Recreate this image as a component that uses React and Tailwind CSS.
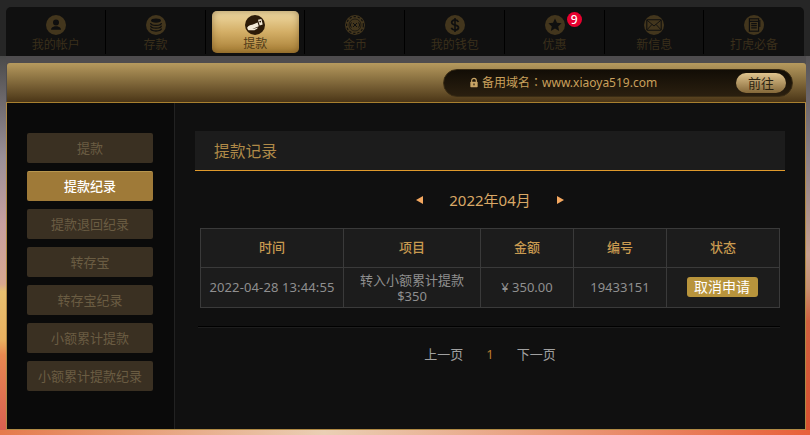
import React from "react";

const font = "font-['Noto_Sans','Noto_Sans_CJK_SC',sans-serif]";

function IconUser() {
  return (
    <svg viewBox="0 0 20 20" className="w-full h-full">
      <circle cx="10" cy="7.6" r="3" fill="currentColor" />
      <path d="M5 14.8 c0-2.4 2.4-3 3.6-3.5 h2.8 c1.2.5 3.6 1.1 3.6 3.5 z" fill="currentColor" />
    </svg>
  );
}

function IconCoins() {
  return (
    <svg viewBox="0 0 20 20" className="w-full h-full" fill="none" stroke="currentColor">
      <ellipse cx="10" cy="5.6" rx="5" ry="2.1" fill="currentColor" stroke="none" />
      <path d="M4.6 8 c0 1.5 2.4 2.4 5.4 2.4 s5.4-.9 5.4-2.4" strokeWidth="1.3" />
      <path d="M4.6 10.8 c0 1.5 2.4 2.4 5.4 2.4 s5.4-.9 5.4-2.4" strokeWidth="1.3" />
      <path d="M4.6 13.6 c0 1.5 2.4 2.4 5.4 2.4 s5.4-.9 5.4-2.4" strokeWidth="1.3" />
    </svg>
  );
}

function IconHand() {
  return (
    <svg viewBox="0 0 20 20" className="w-full h-full">
      <path d="M2.2 12.6 c1.4-2.2 3-2.8 5-2.9 l5.4-2.2 1.2 3.8 -4 1.6 -2.6.2 2.4.3 3.6-.8 c-1.6 2-4.2 3-6.4 2.6 l-3.4.1 c-.6-.8-1.2-1.6-1.2-2.7 z" fill="#f3ead8" />
      <path d="M13 4.8 l3.4-.9 1.3 5.6 -3 .9 z" fill="#f3ead8" />
      <circle cx="15.2" cy="6.6" r="0.9" fill="#2c1b08" />
    </svg>
  );
}

function IconChip() {
  return (
    <svg viewBox="0 0 20 20" className="w-full h-full" fill="none" stroke="currentColor">
      <circle cx="10" cy="10" r="8.4" strokeWidth="1.1" strokeDasharray="2.4 1.8" />
      <circle cx="10" cy="10" r="6" strokeWidth="0.7" />
      <path d="M6.4 7.4 a4 4 0 0 0 0 5.2 M13.6 7.4 a4 4 0 0 1 0 5.2" strokeWidth="0.9" />
      <path d="M8 8 L12 12 M12 8 L8 12" strokeWidth="1" />
    </svg>
  );
}

function IconDollar() {
  return (
    <svg viewBox="0 0 20 20" className="w-full h-full" fill="none" stroke="currentColor">
      <path d="M13.4 7 c-.5-1.3-1.8-2-3.4-2 -1.9 0-3.3 1-3.3 2.5 0 3.4 6.8 1.7 6.8 5 0 1.5-1.5 2.5-3.5 2.5 -1.7 0-3.1-.8-3.6-2.2" strokeWidth="1.8" />
      <path d="M10 3 V17" strokeWidth="1.6" />
    </svg>
  );
}

function IconStar() {
  return (
    <svg viewBox="0 0 20 20" className="w-full h-full">
      <path d="M10 3.6 l2 4.2 4.6.5 -3.4 3.1 1 4.5 -4.2-2.3 -4.2 2.3 1-4.5 -3.4-3.1 4.6-.5 z" fill="currentColor" />
    </svg>
  );
}

function IconMail() {
  return (
    <svg viewBox="0 0 20 20" className="w-full h-full" fill="none" stroke="currentColor">
      <rect x="2.8" y="4.8" width="14.4" height="10.4" rx="0.6" strokeWidth="1.1" />
      <path d="M3 5.2 L10 11 L17 5.2 M3 14.8 L8 9.4 M17 14.8 L12 9.4" strokeWidth="0.9" />
    </svg>
  );
}

function IconSlot() {
  return (
    <svg viewBox="0 0 20 20" className="w-full h-full" fill="none" stroke="currentColor">
      <rect x="5.4" y="3.8" width="9.2" height="12.4" strokeWidth="1.2" />
      <path d="M5.4 6.4 H14.6 M7.2 8.6 H12.8 M7.2 10.6 H12.8 M7.2 12.8 H12.8" strokeWidth="1.2" />
      <path d="M15.8 5 V12" strokeWidth="1.2" />
    </svg>
  );
}

function NavItem({ label, icon, active, badge, last }) {
  return (
    <div className={`relative h-[49px] ${last ? "" : "after:content-[''] after:absolute after:right-0 after:top-[3px] after:h-[44px] after:w-px after:bg-black"}`}>
      {active ? (
        <div className="mx-auto mt-[4px] w-[87px] h-[42px] rounded-[5px] bg-linear-to-b/srgb from-[#f1dca6] via-[#d3ae66] to-[#a67d34] shadow-[inset_0_0_7px_rgba(90,60,20,0.5)] flex flex-col items-center">
          <div className="w-5 h-5 mt-[4px] rounded-full bg-[#2c1b08] text-[#f3ead8]">{icon}</div>
          <div className="text-[12px] leading-[16px] mt-[1px] text-[#4e3a18]">{label}</div>
        </div>
      ) : (
        <div className="w-full flex flex-col items-center pt-[8px]">
          <div className="relative w-5 h-5 rounded-full bg-[#43361d] text-[#0f0f0f]">
            {icon}
            {badge && (
              <span className="absolute left-[22px] top-[-3px] w-[15px] h-[15px] rounded-full bg-[#e8002f] text-white text-[12px] font-medium leading-[15px] text-center">{badge}</span>
            )}
          </div>
          <div className="text-[12px] leading-[16px] mt-[2px] text-[#3a2f1b]">{label}</div>
        </div>
      )}
    </div>
  );
}

const navItems = [
  { label: "我的帐户", icon: <IconUser /> },
  { label: "存款", icon: <IconCoins /> },
  { label: "提款", icon: <IconHand />, active: true },
  { label: "金币", icon: <IconChip /> },
  { label: "我的钱包", icon: <IconDollar /> },
  { label: "优惠", icon: <IconStar />, badge: "9" },
  { label: "新信息", icon: <IconMail /> },
  { label: "打虎必备", icon: <IconSlot />, last: true },
];

const sideItems = ["提款", "提款纪录", "提款退回纪录", "转存宝", "转存宝纪录", "小额累计提款", "小额累计提款纪录"];

export default function App() {
  return (
    <div className={`${font} w-[810px] h-[435px] overflow-hidden flex flex-col bg-[#4e4c4e]`}>
      {/* top nav */}
      <div className="h-[56px] shrink-0 bg-[#262626] pt-[7px] px-[6px]">
        <div className="h-[49px] bg-[#101010] rounded-t-[5px] grid grid-cols-8">
          {navItems.map((item) => (
            <NavItem key={item.label} {...item} />
          ))}
        </div>
      </div>

      <div className="flex h-[374px] shrink-0">
        {/* background showing at the left */}
        <div className="w-[6px] shrink-0 bg-[linear-gradient(180deg,#4a4a4a_0%,#9a9098_27%,#c8a0a0_45%,#d8a890_61%,#e8c070_63%,#e8b060_76%,#e88850_80%,#d86050_100%)]"></div>

        <div className="w-[800px] shrink-0 pt-[7px]">
          {/* gold bar */}
          <div className="h-[39px] ml-px bg-linear-to-b/srgb from-[#b69a5e] to-[#4b3617] rounded-t-[3px] flex items-center justify-end pr-[13px]">
            <div className="w-[350px] h-[28px] rounded-full bg-linear-to-b/srgb from-[#120d06] to-[#2a1f0f] border border-[#3a2c14] flex items-center">
              <svg viewBox="0 0 12 12" className="ml-[25px] w-[10px] h-[11px] text-[#c9a566]">
                <path d="M3.2 5.5 V3.8 a2.8 2.8 0 0 1 5.6 0 V5.5" fill="none" stroke="currentColor" strokeWidth="1.4" />
                <rect x="1.6" y="5.2" width="8.8" height="6.4" rx="0.8" fill="currentColor" />
                <rect x="5.3" y="7.2" width="1.4" height="2.2" fill="#1a1309" />
              </svg>
              <span className="ml-[3px] text-[12px] text-[#c9a05c]">备用域名<span className="font-['Noto_Sans_CJK_TC']">：</span>www.xiaoya519.com</span>
              <button className="ml-auto mr-[6px] w-[50px] h-[20px] rounded-full bg-linear-to-b/srgb from-[#e0c48e] to-[#846839] text-[13px] leading-[20px] text-[#2b2210]">前往</button>
            </div>
          </div>

          {/* panel */}
          <div className="h-[328px] border border-[#b08a45] border-t-[#a8802f] flex">
            <div className="w-[167px] shrink-0 bg-[#0a0a0a] pt-[30px] pl-[20px]">
              <div className="flex flex-col gap-[8px]">
                {sideItems.map((label) => (
                  <div
                    key={label}
                    className={
                      label === "提款纪录"
                        ? "w-[126px] h-[30px] rounded-[2px] bg-[#9f7a38] border-t border-[#b8974f] text-white text-[13px] leading-[29px] text-center font-medium"
                        : "w-[126px] h-[30px] rounded-[2px] bg-[#3a3022] text-[#6a5c42] text-[13px] leading-[31px] text-center"
                    }
                  >
                    {label}
                  </div>
                ))}
              </div>
            </div>

            <div className="flex-1 bg-[#101010] border-l border-[#222222] pt-[28px] pl-[20px] pr-[20px]">
              <div className="h-[40px] bg-[#1c1c1c] border-b border-[#e09a2c] pl-[19px] text-[15.75px] leading-[41px] text-[#b08a48]">提款记录</div>

              <div className="mt-[17px] h-[24px] flex items-center justify-center text-[#d9a866] text-[15px]">
                <span className="w-0 h-0 border-y-[4.5px] border-y-transparent border-r-[7px] border-r-[#f4a860]"></span>
                <span className="mx-[26px]">2022年04月</span>
                <span className="w-0 h-0 border-y-[4.5px] border-y-transparent border-l-[7px] border-l-[#f4a860]"></span>
              </div>

              <table className="mt-[16px] ml-[5px] w-[579px] table-fixed border-collapse bg-[#1c1c1c] text-center text-[13px]">
                <colgroup>
                  <col className="w-[143px]" />
                  <col className="w-[137px]" />
                  <col className="w-[93px]" />
                  <col className="w-[93px]" />
                  <col className="w-[113px]" />
                </colgroup>
                <thead>
                  <tr className="h-[39px] text-[#c89a50] text-[13px]">
                    <th className="border border-[#3a3a3a] font-medium">时间</th>
                    <th className="border border-[#3a3a3a] font-medium">项目</th>
                    <th className="border border-[#3a3a3a] font-medium">金额</th>
                    <th className="border border-[#3a3a3a] font-medium">编号</th>
                    <th className="border border-[#3a3a3a] font-medium">状态</th>
                  </tr>
                </thead>
                <tbody>
                  <tr className="h-[40px] text-[#8f8f8f]">
                    <td className="border border-[#3a3a3a] whitespace-nowrap tracking-[0.12px]">2022-04-28 13:44:55</td>
                    <td className="border border-[#3a3a3a] leading-[16px]">转入小额累计提款<br />$350</td>
                    <td className="border border-[#3a3a3a]">¥ 350.00</td>
                    <td className="border border-[#3a3a3a]">19433151</td>
                    <td className="border border-[#3a3a3a] pr-[2px]">
                      <button className="w-[71px] h-[20px] rounded-[3px] bg-[#b8943c] text-white text-[14px] leading-[20px]">取消申请</button>
                    </td>
                  </tr>
                </tbody>
              </table>

              <div className="mt-[18px] ml-[3px] w-[582px] h-[2px] bg-[#1e1e1e] border-t border-black"></div>

              <div className="mt-[17px] flex justify-center items-center text-[13px] text-[#a0a0a0]">
                <span>上一页</span>
                <span className="mx-[23px] text-[#b97a2e]">1</span>
                <span>下一页</span>
              </div>
            </div>
          </div>
        </div>

        {/* background showing at the right */}
        <div className="w-[4px] shrink-0 bg-[linear-gradient(180deg,#555355_0%,#8a8088_27%,#c8a090_53%,#c89070_62%,#d06040_71%,#d85030_100%)]"></div>
      </div>

      {/* strip of background below the panel */}
      <div className="h-[5px] shrink-0 bg-linear-to-r/srgb from-[#e57a4c] via-[#eacfb4] via-40% to-[#e8603a]"></div>
    </div>
  );
}
